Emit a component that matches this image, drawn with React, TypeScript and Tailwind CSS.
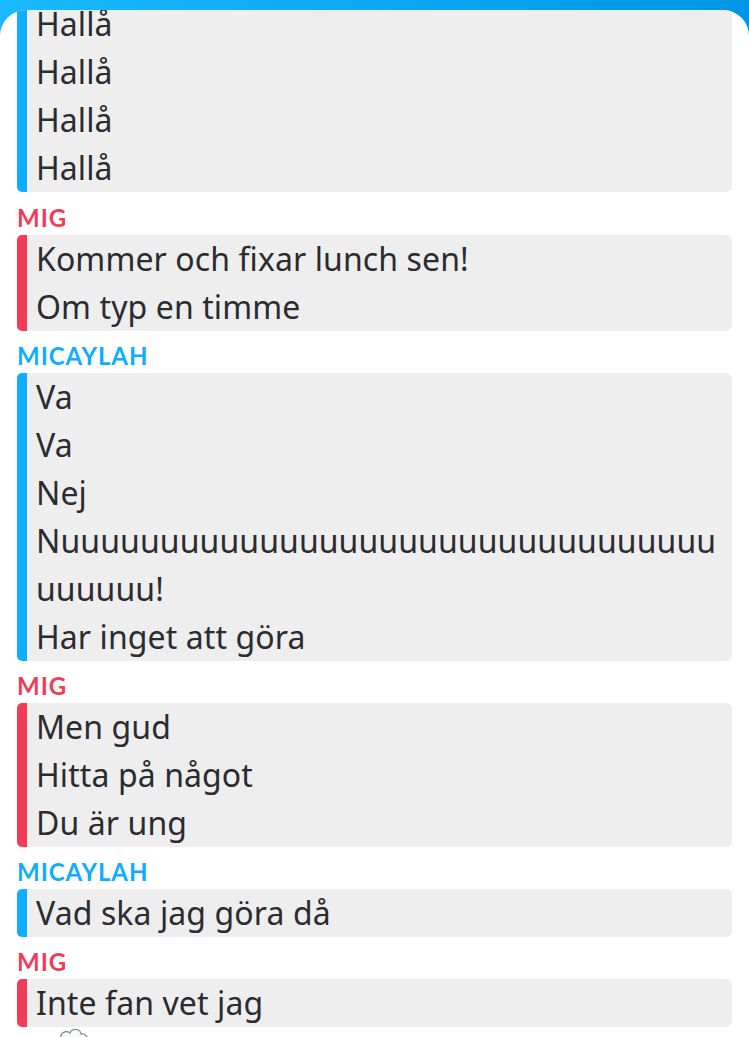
import type { ReactNode } from "react";

type Sender = "me" | "them";

type Group = {
  from: Sender;
  lines: ReactNode[];
};

const groups: Group[] = [
  { from: "them", lines: ["Hallå", "Hallå", "Hallå", "Hallå"] },
  { from: "me", lines: ["Kommer och fixar lunch sen!", "Om typ en timme"] },
  {
    from: "them",
    lines: [
      "Va",
      "Va",
      "Nej",
      "Nuuuuuuuuuuuuuuuuuuuuuuuuuuuuuuuuu",
      "uuuuuu!",
      "Har inget att göra",
    ],
  },
  { from: "me", lines: ["Men gud", "Hitta på något", "Du är ung"] },
  { from: "them", lines: ["Vad ska jag göra då"] },
  { from: "me", lines: ["Inte fan vet jag"] },
];

function SenderLabel({ from, first }: { from: Sender; first?: boolean }) {
  return (
    <div
      className={`flex items-end pb-[5px] pl-[17px] ${first ? "h-[43px]" : "h-[42px]"}`}
    >
      <span
        className={`font-['Lato','Noto_Sans',sans-serif] text-[24px] font-bold leading-[24px] tracking-[0.04em] ${
          from === "me" ? "text-[#f23c57]" : "text-[#0fadff]"
        }`}
      >
        {from === "me" ? "MIG" : "MICAYLAH"}
      </span>
    </div>
  );
}

function Bubble({ from, lines }: Group) {
  return (
    <div className="ml-[17px] flex w-[715px]">
      <div
        className={`w-[10px] shrink-0 rounded-l-[5px] ${
          from === "me" ? "bg-[#f23c57]" : "bg-[#0fadff]"
        }`}
      />
      <div className="flex-1 rounded-r-[6px] bg-[#eeeeee] pl-[9px]">
        {lines.map((l, i) => (
          <div
            key={i}
            className="h-[48px] whitespace-nowrap font-['Noto_Sans','Lato',sans-serif] text-[32px] leading-[48px] tracking-[0.003em] text-[#2b2b30] [font-variant-ligatures:none]"
          >
            {l}
          </div>
        ))}
      </div>
    </div>
  );
}

function Cloud() {
  return (
    <svg width="36" height="20" viewBox="0 0 36 20" fill="none">
      <path
        d="M6 20 C1 19 1 11 7 11 C6 5 13 3 16 6 C18 1 26 1 27 7 C32 6 35 11 32 15 L32 20"
        fill="#f7f9fb"
        stroke="#8a8f96"
        strokeWidth="1.3"
        strokeLinejoin="round"
      />
    </svg>
  );
}

export default function App() {
  return (
    <div className="h-[1037px] w-[749px] overflow-hidden bg-gradient-to-r from-[#19b9ff] to-[#0096e6]">
      <div className="mt-[10px] h-[1027px] overflow-hidden rounded-t-[26px] bg-white">
        <div className="-mt-[10px]">
          {groups.map((g, i) => (
            <div key={i}>
              {i > 0 ? <SenderLabel from={g.from} first={i === 1} /> : null}
              <Bubble {...g} />
            </div>
          ))}
          <div className="pl-[54px]">
            <Cloud />
          </div>
        </div>
      </div>
    </div>
  );
}
